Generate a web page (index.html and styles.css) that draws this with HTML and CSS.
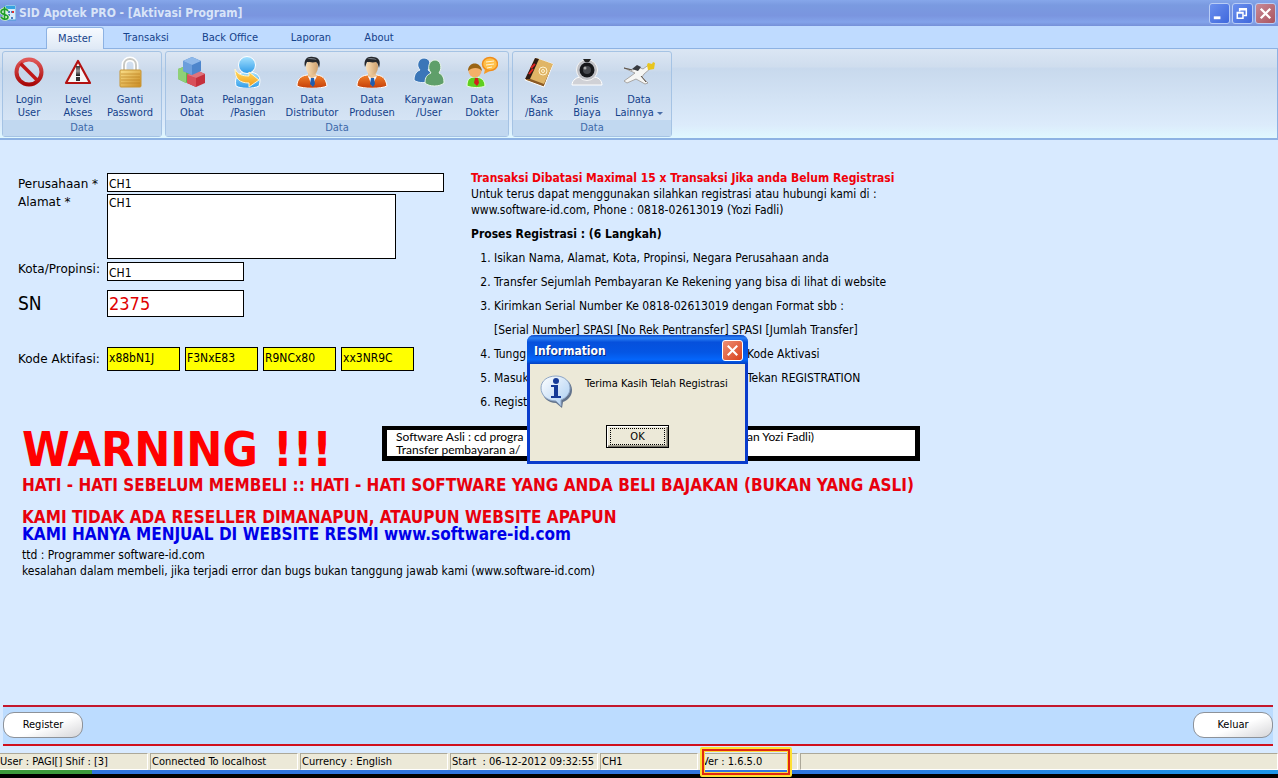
FILE: index.html
```html
<!DOCTYPE html>
<html lang="id">
<head>
<meta charset="utf-8">
<title>SID Apotek PRO</title>
<link rel="stylesheet" href="styles.css">
</head>
<body>
<svg class="defs" width="0" height="0" aria-hidden="true">
  <defs>
    <linearGradient id="red" x1="0" y1="0" x2="0" y2="1"><stop offset="0" stop-color="#e05858"/><stop offset="1" stop-color="#a80808"/></linearGradient>
    <linearGradient id="gold" x1="0" y1="0" x2="1" y2="1"><stop offset="0" stop-color="#fbe08a"/><stop offset="1" stop-color="#c98a20"/></linearGradient>
    <linearGradient id="dark" x1="0" y1="0" x2="0" y2="1"><stop offset="0" stop-color="#333"/><stop offset=".5" stop-color="#999"/><stop offset="1" stop-color="#111"/></linearGradient>
    <linearGradient id="cyan" x1="0" y1="0" x2="0" y2="1"><stop offset="0" stop-color="#a6e2ff"/><stop offset="1" stop-color="#2f9be8"/></linearGradient>
    <linearGradient id="orange" x1="0" y1="0" x2="0" y2="1"><stop offset="0" stop-color="#f0812c"/><stop offset="1" stop-color="#c53e08"/></linearGradient>
    <linearGradient id="skin" x1="0" y1="0" x2="1" y2="0"><stop offset="0" stop-color="#fbe0b8"/><stop offset="1" stop-color="#cfa06c"/></linearGradient>
    <linearGradient id="arrow" x1="0" y1="0" x2="0" y2="1"><stop offset="0" stop-color="#ffe26a"/><stop offset="1" stop-color="#f49a16"/></linearGradient>
    <linearGradient id="bub" x1="0" y1="0" x2="1" y2="1"><stop offset="0" stop-color="#fff"/><stop offset="1" stop-color="#a9cdf2"/></linearGradient>
    <symbol id="person" viewBox="0 0 32 32">
      <path d="M1 30c0-6 3-10 10-11h10c7 1 9 5 10 11-6 3-24 3-30 0z" fill="url(#orange)" stroke="#fff"/>
      <path d="M12 16v5l4 4 4-4v-5z" fill="#e9c294"/>
      <path d="M12 20l4 10 5-10-3 1-2 2-2-2z" fill="#f4f8ff"/>
      <path d="M15 22h3l1 6-2 3-3-3z" fill="#1f5cb0"/>
      <ellipse cx="16" cy="11" rx="6" ry="8" fill="url(#skin)"/>
      <path d="M9 11c-2-8 3-11 8-10 6 0 8 4 6 11-1-3-1-5-3-6-3 1-7 0-9 0-1 2-1 3-2 5z" fill="#26282c"/>
      <path d="M11 3c3-2 8-1 10 1-3-1-7-1-10-1z" fill="#777c84"/>
    </symbol>
  </defs>
</svg>

<header class="titlebar">
  <svg class="app-icon" viewBox="0 0 16 16" aria-hidden="true"><rect x="5" y="0" width="11" height="15" fill="#d9ecfa" stroke="#4d9ed6"/><rect x="6" y="1" width="9" height="3" fill="#36a3e0"/><path d="M8 6h2v2H8zm3 0h2v2h-2zm-3 3h2v2H8zm3 3h2v2h-2z" fill="#4b80c0"/><path d="M12 6h2v2h-2z" fill="#d33"/><path d="M8 6C6 3 1 4 1 7s7 2 7 5-5 3-7 0M4.500 2v13" fill="none" stroke="#d5f5c8" stroke-width="3"/><path d="M8 6C6 3 1 4 1 7s7 2 7 5-5 3-7 0M4.500 2v13" fill="none" stroke="#1f9c2c" stroke-width="1.600"/></svg>
  <h1>SID Apotek PRO - [Aktivasi Program]</h1>
  <div class="window-buttons">
    <button type="button" aria-label="Minimize"><svg viewBox="0 0 20 20"><path d="M4 13h7v3H4z" fill="#fff"/></svg></button>
    <button type="button" aria-label="Restore"><svg viewBox="0 0 20 20"><path d="M7 8V5h7v7h-3M7 6h7" fill="none" stroke="#fff" stroke-width="1.6"/><path d="M4.500 9h6v6h-6zM4 9.500h7" fill="none" stroke="#fff" stroke-width="1.600"/></svg></button>
    <button type="button" class="close" aria-label="Close"><svg viewBox="0 0 20 20"><path d="M5 5l10 10M15 5L5 15" stroke="#fff" stroke-width="2.500"/></svg></button>
  </div>
</header>

<nav class="tabs">
  <button type="button" class="w58 active">Master</button>
  <button type="button" class="w84">Transaksi</button>
  <button type="button" class="w84">Back Office</button>
  <button type="button" class="w78">Laporan</button>
  <button type="button" class="w58">About</button>
</nav>

<section class="ribbon">
  <div class="group">
    <div class="tools">
      <button type="button" class="w50"><svg viewBox="0 0 32 32"><circle cx="16" cy="16" r="12.500" fill="none" stroke="url(#red)" stroke-width="4"/><path d="M7.500 7.500l17 17" stroke="#c01818" stroke-width="3.500"/></svg>Login<br>User</button>
      <button type="button" class="w48"><svg viewBox="0 0 32 32"><path d="M16 5l12 22H4z" fill="#f7f7f7" stroke="#b31212" stroke-width="2.200" stroke-linejoin="round"/><path d="M14 10h4v10h-4z" fill="url(#dark)"/><rect x="14" y="21" width="4" height="4" fill="#333"/></svg>Level<br>Akses</button>
      <button type="button" class="w56"><svg viewBox="0 0 32 32"><path d="M10 15V9c0-8 12-8 12 0v6" fill="none" stroke="#fff" stroke-width="5"/><path d="M10 15V9c0-8 12-8 12 0v6" fill="none" stroke="#c9c9c4" stroke-width="2"/><rect x="6" y="14" width="21" height="17" rx="1" fill="url(#gold)" stroke="#c79535"/><path d="M7 18h19M7 21h19M7 24h19M7 27h19" stroke="#b77d1d" stroke-opacity=".6"/></svg>Ganti<br>Password</button>
    </div>
    <div class="caption">Data</div>
  </div>
  <div class="group">
    <div class="tools">
      <button type="button" class="w50"><svg viewBox="0 0 32 32"><path d="M2 13l8-3 8 4v9l-8 4-8-4z" fill="#62b54a"/><path d="M2 13l8-3v17l-8-4z" fill="#8fd077"/><path d="M11 19l9-5 9 4v9l-9 4-9-4z" fill="#c5303c"/><path d="M11 19l9 3v9l-9-4z" fill="#d8505a"/><path d="M11 19l9-5 9 4-9 4z" fill="#e0747c"/><path d="M7 5l9-4 9 4v10l-9 4-9-4z" fill="#4d86cc"/><path d="M7 5l9 4v10l-9-4z" fill="#6b9edc"/><path d="M7 5l9-4 9 4-9 4z" fill="#8fb9ea"/></svg>Data<br>Obat</button>
      <button type="button" class="w62"><svg viewBox="0 0 32 32"><path d="M4 30c-2-9 2-14 12-14s14 5 11 14c-6 3-18 3-23 0z" fill="url(#cyan)" stroke="#fff"/><circle cx="15" cy="9" r="8.500" fill="url(#cyan)" stroke="#fff"/><path d="M3 13c3 6 8 7 14 7v-4l10 8-10 7v-4c-9 0-14-4-14-14z" fill="url(#arrow)" stroke="#fff5d0"/></svg>Pelanggan<br>/Pasien</button>
      <button type="button" class="w66"><svg><use href="#person"/></svg>Data<br>Distributor</button>
      <button type="button" class="w54"><svg><use href="#person"/></svg>Data<br>Produsen</button>
      <button type="button" class="w60"><svg viewBox="0 0 32 32"><path d="M1 24c0-6 3-9 6-10-5-5-1-12 4-12 6 0 8 7 4 12l4 3-3 9c-5 1-12 1-15-2z" fill="#3b76b8" stroke="#e8f1fa"/><path d="M12 27c0-6 2-8 6-10-5-6-1-13 4-13s8 7 4 13c4 2 5 5 5 10-4 4-15 4-19 0z" fill="#5f9f6a" stroke="#e8f5ea"/></svg>Karyawan<br>/User</button>
      <button type="button" class="w46"><svg viewBox="0 0 32 32"><path d="M1 30c0-6 2-9 8-9s10 3 10 9c-4 2-13 2-18 0z" fill="#5fcf1e" stroke="#e9ffe0"/><path d="M9 22h3l1 5-2 3-3-3z" fill="#d21f1f"/><circle cx="9" cy="15" r="6.500" fill="#f5b068"/><path d="M2 15c0-10 13-10 14 0-3-4-10-4-14 0z" fill="#9a6414"/><ellipse cx="24" cy="8" rx="7.500" ry="6.500" fill="#ffc04a" stroke="#ef8d1c" stroke-width="1.500"/><path d="M19 13l-1 5 6-3z" fill="#f49b27"/><path d="M20 6l8-1M20 9l8-1M21 12l5-1" stroke="#fff6d8"/></svg>Data<br>Dokter</button>
    </div>
    <div class="caption">Data</div>
  </div>
  <div class="group">
    <div class="tools">
      <button type="button" class="w50"><svg viewBox="0 0 32 32"><path d="M12 2l18 6-9 23-19-7z" fill="#8b5a24" stroke="#fff"/><path d="M13 2l17 6-9 20L5 22z" fill="#e0b566"/><path d="M12 2l4 1-9 20-5 0z" fill="#2f1c14"/><path d="M8 12l4-4M6 18l4-5" stroke="#d22" stroke-width="2"/><circle cx="20" cy="15" r="4" fill="none" stroke="#fff3cf"/><circle cx="20" cy="15" r="1.500" fill="none" stroke="#fff3cf"/></svg>Kas<br>/Bank</button>
      <button type="button" class="w46"><svg viewBox="0 0 32 32"><path d="M1 29c0-5 5-8 9-8h12c5 0 9 3 9 8z" fill="#d0d1d6" stroke="#fff"/><circle cx="16" cy="14" r="10.500" fill="#bfc0c5" stroke="#f6f6f6"/><path d="M12 3h8l-2 3h-4z" fill="#222"/><circle cx="16" cy="14" r="7.500" fill="#17181b"/><circle cx="16" cy="14" r="4" fill="#46484d"/><circle cx="14" cy="12" r="1.500" fill="#aaa"/></svg>Jenis<br>Biaya</button>
      <button type="button" class="w58"><svg viewBox="0 0 32 32"><path d="M1 12l9 2 5-3 5 2 7-5 1 4-7 6-2 3 6 6-3 1-9-5-9 4-3-2 7-5 4-3z" fill="#f6f6f4" stroke="#9a9690" stroke-width=".8"/><path d="M24 9l1-2 4 1 1-2 2 1-1 6-6 1z" fill="#e8c51e"/><path d="M9 13l5-4 4 2-3 4z" fill="#373a40"/><path d="M1 12l8 2M18 20l5 6" stroke="#5a5048"/></svg>Data<br>Lainnya <span class="arrow"></span></button>
    </div>
    <div class="caption">Data</div>
  </div>
</section>

<main>
  <div class="columns">
    <form class="form" id="activation">
      <label for="company">Perusahaan *</label>
      <input id="company" value="CH1">
      <label for="address" class="top">Alamat *</label>
      <textarea id="address">CH1</textarea>
      <label for="city" class="top">Kota/Propinsi:</label>
      <input id="city" class="short" value="CH1">
      <label for="sn" class="big">SN</label>
      <input id="sn" class="short serial" value="2375">
      <label for="code1" class="code-label">Kode Aktifasi:</label>
      <div class="codes">
        <input id="code1" value="x88bN1J">
        <input aria-label="Kode 2" value="F3NxE83">
        <input aria-label="Kode 3" value="R9NCx80">
        <input aria-label="Kode 4" value="xx3NR9C">
      </div>
    </form>
    <section class="info">
      <p class="alert">Transaksi Dibatasi Maximal 15 x Transaksi Jika anda Belum Registrasi</p>
      <p>Untuk terus dapat menggunakan silahkan registrasi atau hubungi kami di :</p>
      <p>www.software-id.com, Phone : 0818-02613019 (Yozi Fadli)</p>
      <h2>Proses Registrasi : (6 Langkah)</h2>
      <ol>
        <li>Isikan Nama, Alamat, Kota, Propinsi, Negara Perusahaan anda</li>
        <li>Transfer Sejumlah Pembayaran Ke Rekening yang bisa di lihat di website</li>
        <li>Kirimkan Serial Number Ke 0818-02613019 dengan Format sbb :<br>[Serial Number] SPASI [No Rek Pentransfer] SPASI [Jumlah Transfer]</li>
        <li><span class="lead">Tungg</span>Kode Aktivasi</li>
        <li><span class="lead">Masuk</span>Tekan REGISTRATION</li>
        <li>Regist</li>
      </ol>
    </section>
  </div>
  <section class="warning">
    <div class="warning-head">
      <h2>WARNING !!!</h2>
      <div class="notice">
        <p><span class="lead">Software Asli : cd progra</span>an Yozi Fadli)</p>
        <p>Transfer pembayaran a/</p>
      </div>
    </div>
    <p class="loud">HATI - HATI SEBELUM MEMBELI :: HATI - HATI SOFTWARE YANG ANDA BELI BAJAKAN (BUKAN YANG ASLI)</p>
    <p class="loud second">KAMI TIDAK ADA RESELLER DIMANAPUN, ATAUPUN WEBSITE APAPUN</p>
    <p class="loud blue">KAMI HANYA MENJUAL DI WEBSITE RESMI www.software-id.com</p>
    <p class="sign">ttd : Programmer software-id.com</p>
    <p>kesalahan dalam membeli, jika terjadi error dan bugs bukan tanggung jawab kami (www.software-id.com)</p>
  </section>
</main>

<div class="actions">
  <button type="submit" form="activation">Register</button>
  <button type="button">Keluar</button>
</div>

<footer class="status">
  <span>User : PAGI[] Shif : [3]</span>
  <span>Connected To localhost</span>
  <span>Currency : English</span>
  <span>Start&nbsp; : 06-12-2012 09:32:55</span>
  <span class="narrow">CH1</span>
  <span class="narrow version">Ver : 1.6.5.0</span>
  <span class="rest"></span>
</footer>
<div class="taskbar"><div class="start"></div></div>

<div class="dialog" role="dialog" aria-labelledby="dialog-title">
  <div class="dialog-title"><h2 id="dialog-title">Information</h2><button type="button" aria-label="Close"><svg viewBox="0 0 20 20"><path d="M5 5l10 10M15 5L5 15" stroke="#fff" stroke-width="2.200"/></svg></button></div>
  <div class="dialog-body">
    <div class="message">
      <svg viewBox="0 0 34 34" aria-hidden="true"><path d="M17 2c9 0 15 6 15 13 0 6-4 10-9 12l-1 6-6-5C8 28 2 22 2 15S8 2 17 2z" fill="#62738c"/><path d="M16 1c9 0 14 6 14 12 0 6-4 10-9 12v6l-5-5C7 26 1 20 1 13S7 1 16 1z" fill="url(#bub)" stroke="#8ea6c6"/><circle cx="16" cy="6" r="3" fill="#153a97"/><path d="M11 10h7v11h3v2H11v-2h3v-9h-3z" fill="#153a97"/></svg>
      <p>Terima Kasih Telah Registrasi</p>
    </div>
    <button type="button" class="ok"><span>OK</span></button>
  </div>
</div>
</body>
</html>
```
FILE: styles.css
```css
*, *::after { box-sizing: border-box; }
body {
  position: relative;
  display: flex;
  flex-direction: column;
  min-height: 100vh;
  margin: 0;
  background: #d8eaff;
  color: #000;
  font: 12px/16px "DejaVu Sans Condensed", "DejaVu Sans", "Noto Sans", sans-serif;
}
h1, h2, p, ol { margin: 0; padding: 0; font-size: inherit; }
button, input, textarea { margin: 0; font: inherit; color: inherit; }
button { border: 0; padding: 0; background: none; }
.defs { position: absolute; }

/* Title bar */
.titlebar {
  display: flex;
  align-items: center;
  height: 26px;
  padding-right: 2px;
  background: linear-gradient(#86a7ea, #7a9ae0 20%, #7a95df 60%, #83a3ea 85%, #7590d8);
  color: #d8e4f8;
}
.app-icon { width: 16px; height: 16px; }
.titlebar h1 { flex: 1; padding-left: 3px; font-size: 12px; }
.window-buttons { display: flex; gap: 2px; }
.window-buttons button {
  width: 21px;
  height: 21px;
  border: 1px solid #b9cdf6;
  border-radius: 3px;
  background: linear-gradient(135deg, #6b90ee, #3f68dc);
}
.window-buttons .close { background: linear-gradient(135deg, #c98a96, #a9545f); }
.window-buttons svg, .dialog-title svg { display: block; width: 100%; height: 100%; }

/* Ribbon */
.tabs {
  display: flex;
  align-items: flex-end;
  height: 23px;
  padding-left: 46px;
  background: #bfdbff;
  border-bottom: 1px solid #8db2e3;
  color: #15428b;
  font-size: 11px;
}
.tabs button { height: 21px; }
.tabs .active {
  height: 22px;
  margin-bottom: -1px;
  border: 1px solid #8db2e3;
  border-bottom: 0;
  border-radius: 3px 3px 0 0;
  background: linear-gradient(#f6faff, #dfe9f5);
}
.ribbon {
  display: flex;
  gap: 3px;
  padding: 2px 2px 1px;
  border: 1px solid #8db2e3;
  border-width: 0 1px 2px 0;
  background: linear-gradient(#dbe6f4, #cfddee 20%, #c8d9ed 22%, #dcebfb 85%, #e0f8ff);
  color: #15428b;
  font-size: 11px;
  line-height: 13px;
}
.group { border: 1px solid #a5c3e4; border-radius: 3px; background: linear-gradient(#dce6f3, #cbdaec 22%, #c6d7eb 24%, #dae8f8); }
.tools { display: flex; padding: 4px 3px 1px 1px; }
.tools button { white-space: nowrap; }
.tools svg { display: block; width: 32px; height: 32px; margin: 0 auto 5px; }
.w46 { width: 46px; }
.w48 { width: 48px; }
.w50 { width: 50px; }
.w54 { width: 54px; }
.w56 { width: 56px; }
.w58 { width: 58px; }
.w60 { width: 60px; }
.w62 { width: 62px; }
.w66 { width: 66px; }
.w78 { width: 78px; }
.w84 { width: 84px; }
.arrow { display: inline-block; border: 3px solid transparent; border-top-color: #4a6ea8; border-bottom: 0; vertical-align: middle; }
.caption { height: 16px; background: #c1d8f0; color: #3e6aaa; line-height: 16px; text-align: center; }

/* Activation page */
main { flex: 1; padding-top: 30px; }
.columns { display: flex; gap: 27px; padding-left: 18px; }
.form {
  display: grid;
  grid-template-columns: 89px 337px;
  grid-template-rows: 19px 65px 20px 34px 52px;
  row-gap: 2px;
  align-content: start;
  align-items: end;
  padding-top: 3px;
}
.form label { font-family: "DejaVu Sans", sans-serif; }
.form input, .form textarea {
  width: 100%;
  height: 19px;
  padding: 2px 1px 0;
  border: 1px solid #000;
  border-radius: 0;
  background: #fff;
  line-height: 14px;
}
.form textarea { display: block; width: 289px; height: 65px; padding-top: 1px; resize: none; }
.form .short { width: 137px; }
.form .top { align-self: start; }
.form .big { font-family: inherit; font-size: 19px; line-height: 27px; }
.form .serial { height: 27px; padding-top: 0; color: #e00000; font-size: 18px; line-height: 24px; }
.form .code-label { line-height: 24px; }
.codes { display: flex; gap: 5px; }
.form .codes input { width: 73px; height: 24px; padding: 0 1px 3px; background: #ff0; }
.info { padding-bottom: 12px; white-space: nowrap; }
.alert { color: #f00008; font-weight: bold; }
.info h2 { padding: 8px 0 4px; }
.info ol { padding-left: 23px; line-height: 24px; }
.lead { display: inline-block; width: 253px; }

.warning { padding-left: 22px; white-space: nowrap; }
.warning-head { display: flex; height: 51px; }
.warning h2 { width: 360px; color: #f00; font-size: 48px; line-height: 46px; }
.notice {
  width: 538px;
  height: 35px;
  padding-left: 9px;
  border: 5px solid #000;
  border-top-width: 4px;
  background: #fff;
  font-family: Lato, "Noto Sans", sans-serif;
  font-size: 12px;
  line-height: 13px;
}
.notice .lead { width: 351px; }
.loud { color: #e8000c; font-size: 17px; font-weight: bold; line-height: 17px; }
.second { padding-top: 15px; }
.blue { color: #0000e8; }
.sign { padding-top: 4px; }

/* Bottom bars */
.actions {
  display: flex;
  justify-content: space-between;
  margin: 0 5px 7px 3px;
  padding: 5px 0 6px;
  border-top: 2px solid #c4182c;
  border-bottom: 2px solid #d0101c;
  background: #bcdcff;
}
.actions button {
  width: 80px;
  height: 26px;
  border: 1px solid #8d9299;
  border-radius: 11px;
  background: linear-gradient(160deg, #fff 55%, #d5d5d8);
  font-size: 11px;
}
.status {
  display: flex;
  gap: 2px;
  height: 17px;
  background: #ece9d8;
  font-size: 11px;
  line-height: 16px;
  white-space: nowrap;
}
.status span { width: 148px; padding-left: 1px; border: 1px solid #fff; border-top-color: #aca899; border-left-color: #aca899; }
.status span:first-child { padding-left: 0; border-left: 0; }
.status .narrow { width: 98px; }
.status .rest { flex: 1; }
.status .version { position: relative; }
.version::after {
  content: "";
  position: absolute;
  left: -1px;
  top: -7px;
  width: 92px;
  height: 30px;
  border: 2px solid #ffe030;
  border-radius: 2px;
  box-shadow: inset 0 0 0 2px #e02810, inset 0 0 0 3px #ffd83a;
}
.taskbar { height: 8px; border-bottom: 4px solid #000; background: linear-gradient(90deg, #2f74de 60%, #1c96e8); }
.start { width: 92px; height: 4px; background: #3c9a3c; }

/* Message box */
.dialog {
  position: absolute;
  left: 527px;
  top: 335px;
  width: 221px;
  height: 129px;
  border: 3px solid #0a3ccc;
  border-top: 0;
  border-radius: 7px 7px 0 0;
  background: #ece9d8;
  font-size: 11px;
}
.dialog-title {
  display: flex;
  align-items: center;
  justify-content: space-between;
  height: 29px;
  margin: 0 -3px;
  padding: 2px 5px 0 7px;
  border-radius: 7px 7px 0 0;
  background: linear-gradient(#0a48c8, #2a80f5 10%, #0650dc 25%, #0456e4 60%, #0466fb 85%, #0340c0);
  color: #fff;
  text-shadow: 1px 1px #0a2a80;
}
.dialog-title h2 { font-size: 12px; }
.dialog-title button { width: 21px; height: 21px; border: 1px solid #fff; border-radius: 3px; background: linear-gradient(135deg, #ee8f74, #d8411c); }
.dialog-body { display: flex; flex-direction: column; align-items: center; }
.message { display: flex; gap: 11px; align-self: stretch; height: 61px; padding: 11px 0 0 10px; }
.message svg { width: 34px; height: 34px; }
.message p { padding-top: 1px; white-space: nowrap; }
.ok { width: 63px; height: 23px; padding: 2px; border: 1px solid #000; background: #ece9d8; box-shadow: inset 1px 1px #fff, inset -1px -1px #716f64, inset -2px -2px #aca899; }
.ok span { display: block; height: 17px; margin: 0 1px; border: 1px dotted #000; line-height: 15px; }
```
